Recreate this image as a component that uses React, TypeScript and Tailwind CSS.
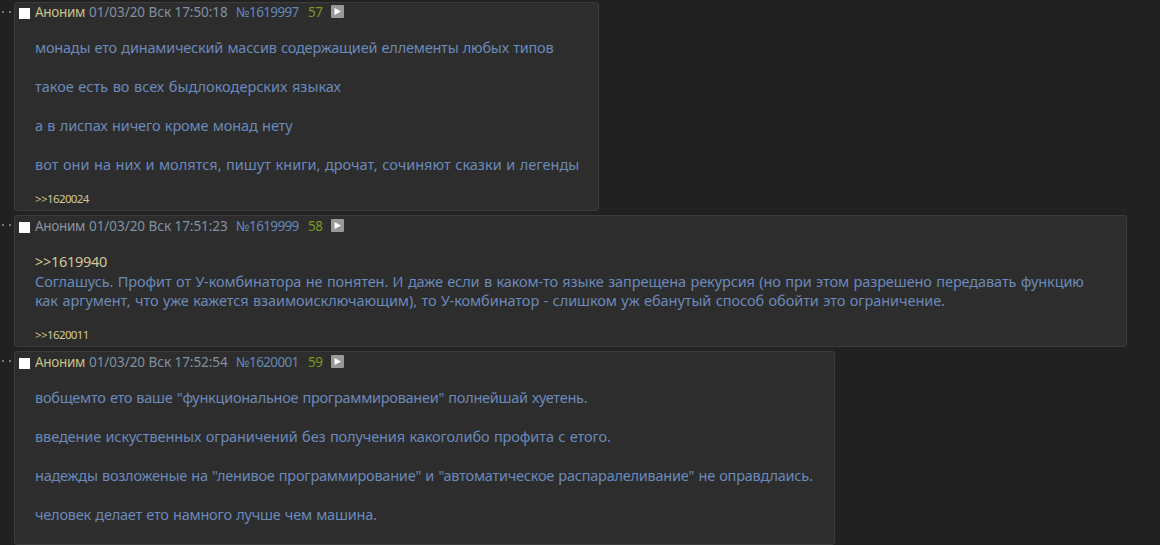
import clsx from "clsx"

type Line = { text: string; className?: string }

type PostProps = {
  date: string
  number: string
  index: number
  className: string
  mailto?: boolean
  quote?: string
  lines: Line[]
  reply?: string
}

const POSTS: PostProps[] = [
  {
    date: "01/03/20 Вск 17:50:18",
    number: "№1619997",
    index: 57,
    className: "w-[585px] h-[209px]",
    mailto: true,
    lines: [
      {
        text: "монады ето динамический массив содержащией еллементы любых типов",
        className: "tracking-[-0.21px]",
      },
      { text: "" },
      { text: "такое есть во всех быдлокодерских языках" },
      { text: "" },
      {
        text: "а в лиспах ничего кроме монад нету",
        className: "tracking-[-0.13px]",
      },
      { text: "" },
      {
        text: "вот они на них и молятся, пишут книги, дрочат, сочиняют сказки и легенды",
        className: "tracking-[0.01px]",
      },
    ],
    reply: ">>1620024",
  },
  {
    date: "01/03/20 Вск 17:51:23",
    number: "№1619999",
    index: 58,
    className: "w-[1113px] h-[132px] pt-px",
    quote: ">>1619940",
    lines: [
      {
        text: "Соглашусь. Профит от У-комбинатора не понятен. И даже если в каком-то языке запрещена рекурсия (но при этом разрешено передавать функцию",
        className: "tracking-[-0.094px]",
      },
      {
        text: "как аргумент, что уже кажется взаимоисключающим), то У-комбинатор - слишком уж ебанутый способ обойти это ограничение.",
        className: "tracking-[-0.07px]",
      },
    ],
    reply: ">>1620011",
  },
  {
    date: "01/03/20 Вск 17:52:54",
    number: "№1620001",
    index: 59,
    className: "w-[821px] h-[194px] pt-px",
    mailto: true,
    lines: [
      {
        text: "вобщемто ето ваше \"функциональное программированеи\" полнейшай хуетень.",
        className: "tracking-[-0.27px]",
      },
      { text: "" },
      {
        text: "введение искуственных ограничений без получения какоголибо профита с етого.",
        className: "tracking-[-0.107px]",
      },
      { text: "" },
      {
        text: "надежды возложеные на \"ленивое программирование\" и \"автоматическое распаралеливание\" не оправдлаись.",
        className: "tracking-[-0.232px]",
      },
      { text: "" },
      {
        text: "человек делает ето намного лучше чем машина.",
        className: "tracking-[-0.216px]",
      },
    ],
  },
]

const PlayIcon = () => (
  <svg className="mt-[2px] ml-[9px] size-[13px]" viewBox="0 0 13 13">
    <rect width="13" height="13" rx="1" fill="#999" />
    <path d="M3.5 3 L10 6.5 L3.5 10 Z" fill="#fff" />
  </svg>
)

const Post = ({
  date,
  number,
  index,
  className,
  mailto,
  quote,
  lines,
  reply,
}: PostProps) => (
  <div className="flex">
    <div className="flex w-[14px] shrink-0 gap-[5px] pt-[9px] pl-[2px]">
      <span className="size-[2px] bg-[#777]" />
      <span className="size-[2px] bg-[#777]" />
    </div>
    <article
      className={clsx(
        "shrink-0 rounded-[3px] border border-[#3c3c3c] bg-[#2d2d2d]",
        className
      )}
    >
      <header className="flex h-[19px] items-start pl-[4px] text-[13.5px] leading-[19px] whitespace-nowrap">
        <span className="mt-[5px] size-[11px] bg-white" />
        <span
          className={clsx(
            "ml-[5px] w-[54px] tracking-[-0.3px]",
            mailto ? "text-[#c8c08c]" : "text-[#8a929c]"
          )}
        >
          Аноним
        </span>
        <span className="w-[147px] tracking-[-0.04px] text-[#8390a2]">
          {date}
        </span>
        <span className="w-[72px] tracking-[-0.65px] text-[#6487b8]">
          {number}
        </span>
        <span className="w-[14px] tracking-[-0.5px] text-[#789922]">
          {index}
        </span>
        <PlayIcon />
      </header>
      <div className="pt-[16px] pl-[20px] text-[14.5px] leading-[19.5px] [word-spacing:0.75px] whitespace-pre text-[#6b89ba]">
        {quote && (
          <p className="tracking-[-0.3px] text-[#d0c897]">{quote}</p>
        )}
        {lines.map((line, i) => (
          <p key={i} className="h-[19.5px]">
            <span className={line.className}>{line.text}</span>
          </p>
        ))}
      </div>
      {reply && (
        <p className="pt-[15px] pl-[20px] text-[11.5px] leading-[18px] tracking-[-0.6px] text-[#d0c897]">
          {reply}
        </p>
      )}
    </article>
  </div>
)

export default function App() {
  return (
    <main className="flex h-[545px] flex-col gap-[4px] overflow-hidden bg-[#212121] pt-[2px] font-['Noto_Sans',sans-serif]">
      {POSTS.map((post) => (
        <Post key={post.number} {...post} />
      ))}
    </main>
  )
}
